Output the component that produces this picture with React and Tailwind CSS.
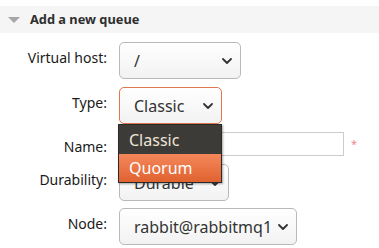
import React from "react";

const Chevron = () => (
  <svg width="10" height="6" viewBox="0 0 10 6" className="shrink-0">
    <path d="M1 1 L5 5 L9 1" fill="none" stroke="#333" strokeWidth="1.8" strokeLinecap="round" strokeLinejoin="round" />
  </svg>
);

const Select = ({ value, w, orange }) => (
  <div
    className={`flex h-[37px] items-center justify-between rounded-[5px] border bg-gradient-to-b from-white to-[#f2f2f2] pl-[14px] pr-[8px] text-[16px] text-[#333] ${orange ? "border-[#e0774f]" : "border-[#b9b9b9]"} ${w}`}
  >
    <span>{value}</span>
    <Chevron />
  </div>
);

const Label = ({ children }) => (
  <div className="flex w-[107px] shrink-0 justify-end pt-[5px] text-[14px] leading-[21px] text-[#1a1a1a]">{children}</div>
);

export default function App() {
  return (
    <div className="h-[248px] w-[379px] overflow-hidden bg-white font-['Noto_Sans',sans-serif]">
      <div className="mt-[6px] flex h-[27px] items-center bg-[#f5f5f5] pl-[8px]">
        <svg width="12" height="6" viewBox="0 0 12 6">
          <path d="M0 0 H12 L6 6 Z" fill="#a6a6a6" />
        </svg>
        <span className="ml-[10px] text-[12.8px] font-bold text-[#2f2f2f]">Add a new queue</span>
      </div>
      <div className="relative flex flex-col pt-[9px]">
        <div className="flex gap-[12px]">
          <Label>Virtual host:</Label>
          <Select value="/" w="w-[122px]" />
        </div>
        <div className="mt-[8px] flex gap-[12px]">
          <Label>Type:</Label>
          <Select value="Classic" w="w-[103px]" orange />
        </div>
        <div className="mt-[7px] flex gap-[12px]">
          <Label>Name:</Label>
          <div className="flex items-center gap-[7px]">
            <div className="h-[24px] w-[225px] border border-[#cccccc] bg-white" />
            <span className="text-[11px] text-[#f58a8a]">*</span>
          </div>
        </div>
        <div className="mt-[7px] flex gap-[12px]">
          <Label>Durability:</Label>
          <Select value="Durable" w="w-[110px]" />
        </div>
        <div className="mt-[7px] flex gap-[12px]">
          <Label>Node:</Label>
          <Select value="rabbit@rabbitmq1" w="w-[178px]" />
        </div>
        <div className="absolute left-[118px] top-[91px] w-[104px] border border-[#2a2a28] text-[16px] shadow-[1px_1px_2px_rgba(0,0,0,0.35)]">
          <div className="flex h-[29px] items-center bg-[#3c3b37] pl-[10px] text-[#efe6d6]">Classic</div>
          <div className="flex h-[28px] items-center bg-gradient-to-b from-[#f4875a] to-[#e0622f] pl-[10px] text-white">Quorum</div>
        </div>
      </div>
    </div>
  );
}
